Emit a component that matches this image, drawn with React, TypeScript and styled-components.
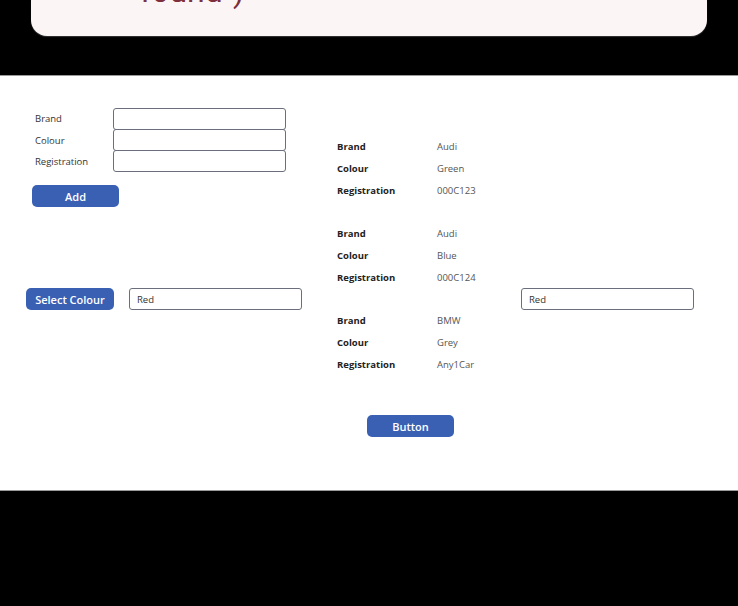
import styled, { createGlobalStyle } from "styled-components";

const GlobalStyle = createGlobalStyle`
    html, body {
        margin: 0;
        padding: 0;
        background: #000;
    }
    body {
        font-family: "Open Sans", "Liberation Sans", sans-serif;
        color: #333;
        width: 738px;
        height: 606px;
        overflow: hidden;
    }
`;

const Screen = styled.div`
    display: flex;
    flex-direction: column;
    width: 738px;
    height: 606px;
    background: #000;
`;

const Toast = styled.div`
    margin: 0 31px;
    height: 36px;
    background: #fcf5f5;
    border-radius: 0 0 16px 16px;
    overflow: hidden;
    box-shadow: 0 1px 1px rgba(255, 255, 255, 0.2);
`;

const ToastText = styled.div`
    margin: -25px 0 0 109px;
    font-family: Roboto, "Open Sans", sans-serif;
    font-size: 32px;
    line-height: 32px;
    color: #7d2f3b;
`;

const Panel = styled.div`
    margin-top: 39px;
    height: 414px;
    background: #fff;
    border-top: 1px solid #9a9a9a;
    border-bottom: 1px solid #9a9a9a;
    display: grid;
    grid-template-columns: 311px 184px 1fr;
`;

const Column = styled.div<{ $top?: number }>`
    display: flex;
    flex-direction: column;
    align-items: flex-start;
    padding-left: 26px;
    padding-top: ${(p) => p.$top ?? 0}px;
`;

const FormGrid = styled.div`
    display: grid;
    grid-template-columns: 78px 173px;
    margin-left: 9px;
`;

const FieldLabel = styled.label`
    display: flex;
    align-items: center;
    height: 21px;
    font-size: 9.5px;
    color: #333;
`;

const TextBox = styled.input<{ $stacked?: boolean }>`
    box-sizing: border-box;
    width: 173px;
    height: 22px;
    margin: ${(p) => (p.$stacked ? "-1px 0 0 0" : "0")};
    border: 1px solid #6b6e7c;
    border-radius: 3px;
    padding: 0 7px;
    font-family: "Open Sans", "Liberation Sans", sans-serif;
    font-size: 9.5px;
    color: #333;
    background: #fff;
    outline: none;
`;

const Button = styled.button<{ $width?: number }>`
    box-sizing: border-box;
    width: ${(p) => p.$width ?? 87}px;
    height: 22px;
    border: none;
    border-radius: 5px;
    background: #3a60b4;
    color: #fff;
    font-family: "Open Sans", "Liberation Sans", sans-serif;
    font-size: 11px;
    font-weight: 600;
    padding: 0;
    cursor: pointer;
`;

const AddButton = styled(Button)`
    margin: 13px 0 0 6px;
`;

const SelectRow = styled.div`
    display: flex;
    align-items: center;
    gap: 15px;
    margin-top: 81px;
`;

const Gallery = styled.div`
    display: flex;
    flex-direction: column;
    gap: 22px;
`;

const Item = styled.div`
    display: grid;
    grid-template-columns: 100px 1fr;
    grid-auto-rows: 21.7px;
    align-items: center;
`;

const Key = styled.span`
    font-size: 9.5px;
    font-weight: 700;
    color: #222;
`;

const Value = styled.span`
    font-size: 9.5px;
    color: #555;
`;

const BottomButton = styled(Button)`
    margin: 40px 0 0 30px;
`;

const RightBox = styled(TextBox)`
    margin-top: 212px;
`;

const cars = [
    { brand: "Audi", colour: "Green", reg: "000C123" },
    { brand: "Audi", colour: "Blue", reg: "000C124" },
    { brand: "BMW", colour: "Grey", reg: "Any1Car" },
];

export default function App() {
    return (
        <Screen>
            <GlobalStyle />
            <Toast>
                <ToastText>found")</ToastText>
            </Toast>
            <Panel>
                <Column $top={32}>
                    <FormGrid>
                        <FieldLabel>Brand</FieldLabel>
                        <TextBox />
                        <FieldLabel>Colour</FieldLabel>
                        <TextBox $stacked />
                        <FieldLabel>Registration</FieldLabel>
                        <TextBox $stacked />
                    </FormGrid>
                    <AddButton>Add</AddButton>
                    <SelectRow>
                        <Button $width={88}>Select Colour</Button>
                        <TextBox defaultValue="Red" />
                    </SelectRow>
                </Column>
                <Column $top={60}>
                    <Gallery>
                        {cars.map((c, i) => (
                            <Item key={i}>
                                <Key>Brand</Key>
                                <Value>{c.brand}</Value>
                                <Key>Colour</Key>
                                <Value>{c.colour}</Value>
                                <Key>Registration</Key>
                                <Value>{c.reg}</Value>
                            </Item>
                        ))}
                    </Gallery>
                    <BottomButton>Button</BottomButton>
                </Column>
                <Column>
                    <RightBox defaultValue="Red" />
                </Column>
            </Panel>
        </Screen>
    );
}
